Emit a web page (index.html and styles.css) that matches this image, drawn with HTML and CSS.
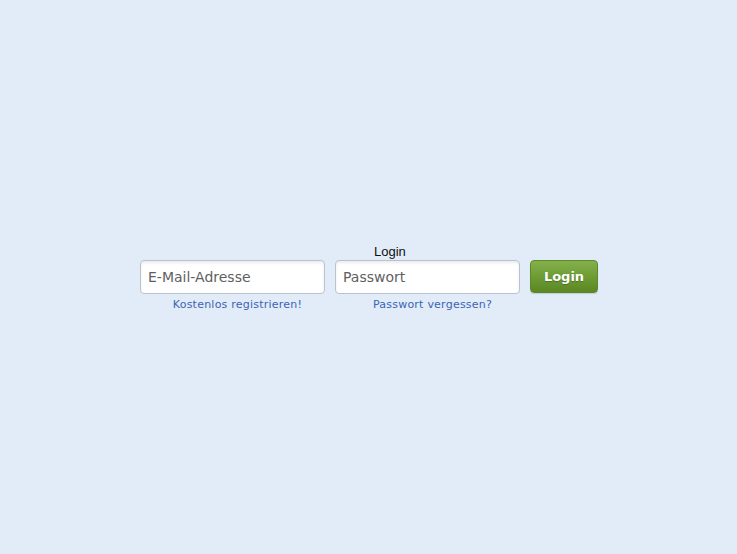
FILE: index.html
```html
<!DOCTYPE html>
<html lang="de">
<head>
<meta charset="utf-8">
<title>Login</title>
<link rel="stylesheet" href="styles.css">
</head>
<body>
<div class="page">
  <form class="login">
    <div class="caption">Login</div>
    <div class="row">
      <div class="field">
        <input class="input" type="text" placeholder="E-Mail-Adresse">
        <a class="link link-reg" href="#">Kostenlos registrieren!</a>
      </div>
      <div class="field">
        <input class="input" type="password" placeholder="Passwort">
        <a class="link link-pw" href="#">Passwort vergessen?</a>
      </div>
      <button class="btn" type="button">Login</button>
    </div>
  </form>
</div>
</body>
</html>
```

FILE: styles.css
```css
html, body {
  margin: 0;
  padding: 0;
}
body {
  background: #e2ecf8;
  width: 737px;
  height: 554px;
  overflow: hidden;
}
.page {
  padding: 244px 0 0 140px;
}
.login {
  display: flex;
  flex-direction: column;
}
.caption {
  font-family: "Liberation Sans", Arial, sans-serif;
  font-size: 13px;
  line-height: 16px;
  color: #111;
  margin-left: 234px;
}
.row {
  display: flex;
  gap: 10px;
  align-items: flex-start;
}
.field {
  display: flex;
  flex-direction: column;
  align-items: center;
  width: 185px;
}
.input {
  box-sizing: border-box;
  width: 185px;
  height: 34px;
  border: 1px solid #b9c2ce;
  border-radius: 4px;
  background: #fff;
  box-shadow: inset 0 2px 3px rgba(0,0,0,0.08);
  padding: 0 7px;
  font-family: "DejaVu Sans", Verdana, sans-serif;
  font-size: 14px;
  color: #333;
  outline: none;
}
.input::placeholder {
  color: #5f5f5f;
}
.link {
  font-family: "DejaVu Sans", Verdana, sans-serif;
  font-size: 11px;
  line-height: 14px;
  letter-spacing: 0.23px;
  color: #3a64b4;
  text-decoration: none;
  margin-top: 4px;
  margin-left: 10px;
}
.btn {
  box-sizing: border-box;
  width: 68px;
  height: 33px;
  border: 1px solid #5c8a2a;
  border-radius: 4px;
  background: linear-gradient(#84b04a, #6d9c35 50%, #5a8722);
  box-shadow: 0 1px 1px rgba(0,0,0,0.15);
  font-family: "DejaVu Sans", Verdana, sans-serif;
  font-weight: bold;
  font-size: 13px;
  color: #fff;
  text-shadow: 0 1px 1px rgba(0,0,0,0.25);
  padding: 0;
  cursor: pointer;
}
```
